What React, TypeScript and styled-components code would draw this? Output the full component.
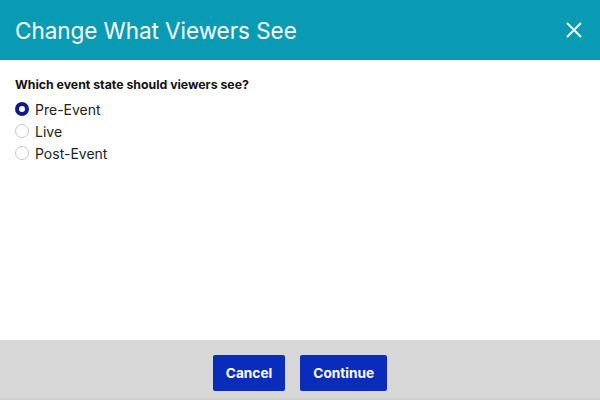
import React, { useState } from "react";
import styled, { createGlobalStyle } from "styled-components";

const Global = createGlobalStyle`
  html, body { margin: 0; padding: 0; width: 600px; height: 400px; overflow: hidden; }
  body { font-family: "Inter", "Liberation Sans", sans-serif; background: #fff; }
  #root { height: 400px; }
`;

const Dialog = styled.div`
  width: 600px;
  height: 400px;
  display: flex;
  flex-direction: column;
  background: #fff;
`;

const Header = styled.header`
  height: 60px;
  flex: none;
  background: #0a9bb4;
  display: flex;
  align-items: center;
  justify-content: space-between;
  padding: 0 16px 0 15px;
  box-sizing: border-box;
`;

const Title = styled.h1`
  margin: 0;
  color: #fff;
  font-size: 22.5px;
  font-weight: 400;
  letter-spacing: -0.05px;
`;

const CloseButton = styled.button`
  background: none;
  border: none;
  padding: 0;
  width: 20px;
  height: 20px;
  display: flex;
  align-items: center;
  justify-content: center;
  cursor: pointer;
`;

const Body = styled.div`
  flex: 1;
  padding: 17px 15px 0;
  box-sizing: border-box;
`;

const Question = styled.div`
  font-size: 12.3px;
  font-weight: 700;
  color: #111;
  margin-bottom: 6px;
`;

const Option = styled.label`
  display: flex;
  align-items: center;
  gap: 6px;
  height: 22px;
  font-size: 14px;
  color: #222;
  cursor: pointer;
`;

const RadioDot = styled.span<{ $checked: boolean }>`
  width: 14px;
  height: 14px;
  border-radius: 50%;
  box-sizing: border-box;
  flex: none;
  border: ${(p) => (p.$checked ? "4px solid #0c1a8e" : "1px solid #c8c8c8")};
  background: #fff;
`;

const Footer = styled.footer`
  height: 60px;
  flex: none;
  background: #d8d8d8;
  border-bottom: 2px solid #cfcfcf;
  box-sizing: border-box;
  display: flex;
  justify-content: center;
  align-items: flex-start;
  padding-top: 15px;
  gap: 15px;
`;

const Button = styled.button`
  height: 36px;
  padding: 0 13px;
  background: #0a2cbb;
  color: #fff;
  border: none;
  border-radius: 2px;
  font-family: inherit;
  font-size: 13.7px;
  font-weight: 700;
  cursor: pointer;
`;

const options = ["Pre-Event", "Live", "Post-Event"];

export default function App() {
  const [value, setValue] = useState("Pre-Event");
  return (
    <>
      <Global />
      <Dialog>
        <Header>
          <Title>Change What Viewers See</Title>
          <CloseButton aria-label="Close">
            <svg width="16" height="16" viewBox="0 0 16 16">
              <path d="M1 1 L15 15 M15 1 L1 15" stroke="#fff" strokeWidth="1.8" />
            </svg>
          </CloseButton>
        </Header>
        <Body>
          <Question>Which event state should viewers see?</Question>
          {options.map((o) => (
            <Option key={o} onClick={() => setValue(o)}>
              <RadioDot $checked={value === o} />
              {o}
            </Option>
          ))}
        </Body>
        <Footer>
          <Button>Cancel</Button>
          <Button>Continue</Button>
        </Footer>
      </Dialog>
    </>
  );
}
